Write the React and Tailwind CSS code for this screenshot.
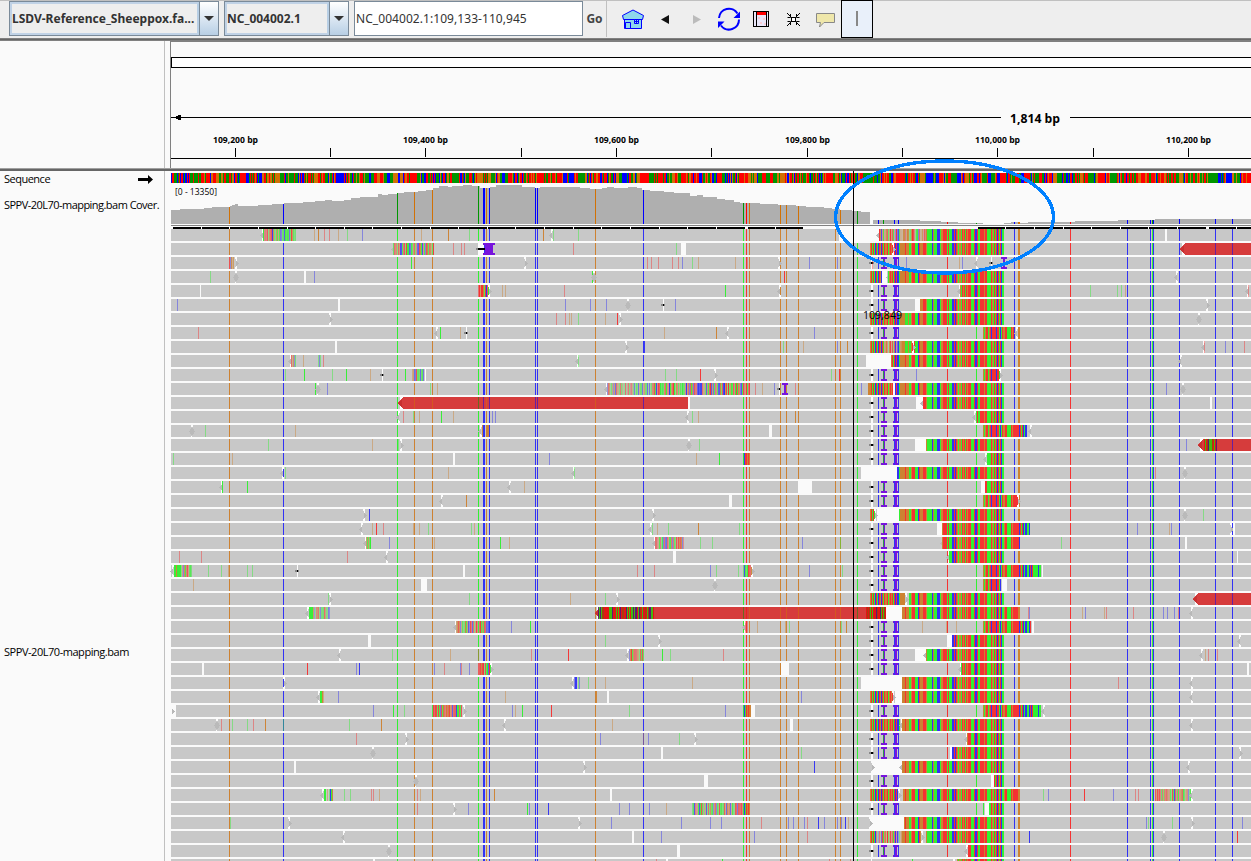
import React from "react";

const TRACK_X = 171;
const TRACK_END = 1251;
const ROW_TOP = 229;
const ROW_STEP = 14;
const ROW_H = 12;

const READ = { g: "#32f032", b: "#3232f5", o: "#cd8232", r: "#f53232" };
const REF = { g: "#009600", b: "#0000ff", o: "#d17105", r: "#ff0000" };

// Mismatch bases of the clipped reads, one letter per pixel, from x = 870.
const CLIP = [
  "orgrgbrgbrobrgroorgororgrbrbbgoo", // 870
  "oooroo" + "o" + "gg" + "o" + "rrr" + "ggg" + "b" + "r" + "ooo" + "rrr" + "o", // 902
  "ggggg" + "b" + "o" + "ggg" + "bbb" + "g" + "oo" + "rrrr", // 927
  "g" + "r" + "ggg" + "bb" + "rbr" + "ogoog" + "rorgr", // 947
  "o" + "rrr" + "ggg" + "r" + "bb" + "r" + "gg" + "rrrr" + "orr", // 967
  "gggg" + "rogrgrbrgrbgg", // 987
].join("");
// Bases beyond the right edge of the clipped segment, from x = 983.
const TAIL = "ogorrgorbrrrrbrrgbgroorrggggrorrrrrrbrgrbgbbggbrbrgggggbgg";

// Positions where every read differs from the reference.
const SNPS = [
  ["o", 229], ["b", 283], ["g", 397], ["o", 414], ["o", 432], ["g", 478], ["b", 483, 2], ["o", 486], ["b", 489],
  ["b", 535], ["b", 537], ["o", 595], ["b", 643], ["g", 743], ["r", 746], ["o", 749], ["o", 780], ["o", 786],
  ["o", 798], ["o", 835], ["o", 840], ["g", 857], ["b", 1014], ["o", 1018, 2], ["r", 1070], ["b", 1127],
  ["b", 1150], ["g", 1152], ["b", 1153], ["b", 1179], ["b", 1215], ["b", 1232],
];
const COVERAGE_EXTRA = [["b", 878], ["g", 883], ["b", 894], ["b", 898], ["r", 947], ["g", 976]];

/* Row tokens:
   g/b/o/r x   faint mismatch, upper case = strong;  w x:w  gap between reads
   <x >x *x    read tips;  ~x:w/a  run of low quality mismatches;  -x  deletion
   Ix          insertion;  Px  wide insertion;  A  spanning read
   Cx:y        clipped segment;  Tx  tail up to x
   Xx:w        red read;  Yx:w  mismatches on a red read */
const ROWS = [
  "<262 ~263:33/.7 o314 O318 r324 r329 o338 g347 b362 o421 O448 g469 O543 <551 g553 g578 w839:40 <878 C879:1004 V880:46 w1165:2",
  "<393 ~393:41/.7 r453 r461 r464 w478:6 P483 r573 g676 w681:5 C870:1004 >894 X1182:69",
  "~229:5/.6 >237 G411 >526 r647 r651 r658 r672 r678 b682 g692 o698 o735 r746 r747 >780 b809 b837 A r872 b906 o959 b962 <976 -992 I1001",
  "g210 *236 w304:2 b314 G592 *594 R784 C870:882 w882:5 <888 C888:1004 <1176",
  "w200:1 ~478:11/.9 >490 o502 o505 r564 G725 <779 A <959 C960:1004 g1090 g1117 g1121 o1125 <1247 r1248",
  "b177 w338:2 b565 b590 b606 *628 -664 b675 A w915:5 C920:1004 >1208",
  ">331 r556 r565 o569 o571 g578 o605 R617 >621 g857 C870:1004 G905 G906 G907 *1199",
  "r198 <436 G440 o460 -467 o664 O716 <727 b814 A C983:990 T1014 <1016",
  "w335:2 >627 B643 B644 g783 o803 b837 O847 C870:1004 V884:18 G905 G906 G907 >914 <1203 r1204 b1225 r1244",
  "<290 ~291:5/.6 o303 g318 b319 g320 r323 <577 g578 w866:25 C891:1004 <1180",
  "g285 G304 g332 G346 o370 -383 G405 ~412:12/.6 w425:1 g665 g676 R700 >716 g831 R839 A b916 T1000 >1001",
  "G315 *318 b327 g430 o437 <606 ~607:45/.45 ~652:98/.75 r755 o762 b774 -780 I782 r795 b861 r868 C868:893 w893:2 C895:1004 b1166 *1183",
  "X400:288 w688:2 A w916:7 <922 C923:1004 w1210:2",
  "<398 r403 g413 o419 G441 o453 b492 b495 <687 g692 o698 O795 A <974 C977:1004",
  "*192 g205 o295 <480 O482 O486 O487 O488 w769:3 A T1027 <1030",
  "g268 o372 g398 >402 *689 g699 A w915:11 C926:1004 b1186 X1200:51 Y1204:13",
  "g173 o232 w453:2 b549 o696 G719 B744 R745 R746 O747 R748 O749 A <985 C987:1004",
  "<282 g285 o448 <573 g574 w861:36 C897:1004 r1155 *1185",
  "<221 G222 G247 <509 o524 w798:14 A w981:4 C985:1004",
  "<441 O466 w729:3 A T1018 >1019",
  ">365 B369 >654 C870:876 w877:22 >876 C899:1004 *1185 g1203",
  "<361 o372 R376 r383 o413 o419 g428 g471 o474 <650 g652 o657 g668 O698 g739 A w937:5 C942:1004 T1030 b1137 r1150 o1169 b1171 >1232 w1233:2",
  "<365 ~366:5/.8 b389 o434 G500 o509 <654 ~655:29/.6 g700 g712 b802 g840 A <942 C942:1004 T1020 g1061 w1185:2",
  "r179 r201 r347 <386 w673:3 A <948 C949:1004 w1237:1",
  "<172 G174 G175 O176 G177 G178 G179 G180 ~181:11/.6 g208 g221 o228 g247 g252 -298 w463:2 r637 r654 b710 g716 g738 ~743:9/.7 >753 b809 g842 A C983:990 T1041 w1042:1",
  "o193 w421:6 *715 A T1001 w1002:5",
  "g328 >331 g469 o570 g605 >618 C870:905 >907 C909:1004 X1195:56",
  "<307 G309 G310 G311 G312 ~313:17/.5 X597:289 Y598:56 Y866:20 w886:16 C902:1004 T1018 r1028 b1029 o1082 b1085 o1104 r1106 r1133 b1163 b1167 b1174 r1178 <1191",
  "<455 ~456:33/.7 b511 G530 <744 r745 r746 r747 o757 o785 g789 g841 O846 A o922 o946 o956 T1031 w1032:2",
  "w368:3 g605 >660 A w947:5 C952:1004 <1239",
  "<339 g392 o450 r478 r531 R568 <627 ~629:15/.7 G662 g670 r723 A w915:11 <925 C926:1004 <1201 o1205 r1208 r1217",
  "w202:2 R307 b356 B359 b434 r444 b460 r461 b469 ~478:13/.8 >492 w781:8 A <960 C961:1004 w1247:2",
  ">285 <572 b574 B575 B576 g578 b579 g588 o605 o692 w861:41 C902:1004 r1118 <1191",
  "<318 G320 G321 O322 o323 b338 o505 O596 w607:2 b801 C870:893 w895:7 >894 C902:1004 <1191",
  "w171:5 >173 b373 G393 g404 ~432:30/.8 >465 b512 o515 G522 R551 g629 b725 B744 G745 R746 O747 R748 O749 O750 w751:4 A T1041 <1043",
  "*217 r221 o229 g232 g247 r253 O265 g283 g349 O381 <504 o612 w790:3 C870:900 <901 C902:1004 <1191",
  "r356 >407 b600 o643 b648 g679 >696 A <966 C967:1004",
  "*373 w661:2 g801 A w950:2 C952:1004 >1241",
  "w294:2 >585 B814 w872:30 >873 <901 C902:1004 <1188",
  "*416 w704:4 A T991 w991:3 C994:1004",
  "<322 G324 G325 o327 g329 B330 G331 O332 g344 g350 r371 r373 o379 r417 o420 O494 w610:2 C870:898 >900 C903:1004 T1018 g1043 b1048 R1084 b1113 r1135 r1138 ~1155:36/.6 <1191",
  "r417 >455 b468 G527 b529 B548 b619 b629 b649 o666 ~692:51/.6 B744 G745 R746 O747 R748 A G983 w985:4 C989:1004",
  "g230 >290 >580 b611 b681 b710 b721 r761 o780 b788 b793 b804 r807 B818 b824 b837 b841 B845 o848 w870:34 >871 C904:1004 b1146 g1148 g1172 >1193 b1242",
  "<343 w632:2 b661 b754 r807 C870:921 V876:26 >923 C926:1004 b1029 B1029 *1164 R1237",
  "*389 w677:3 A <966 C968:1004",
  ">375 r656 w666:2 G722 r829 r850 -872 G912 >955 C957:1004",
];

// [x, top] steps of the coverage area.
const COVERAGE = [
  [171, 210], [180, 209], [204, 208], [212, 207], [230, 206], [232, 205], [235, 204], [238, 206], [258, 205],
  [272, 204], [284, 203], [303, 202], [315, 201], [325, 200], [332, 201], [344, 200], [351, 198], [360, 197],
  [378, 194], [382, 195], [388, 194], [397, 193], [404, 192], [418, 191], [426, 190], [433, 188], [439, 186],
  [448, 187], [452, 186], [463, 185], [472, 186], [480, 188], [490, 187], [496, 185], [522, 187], [535, 188],
  [540, 187], [580, 188], [590, 189], [602, 188], [607, 187], [614, 188], [628, 187], [637, 188], [642, 190],
  [650, 191], [664, 192], [674, 193], [690, 196], [697, 195], [703, 197], [717, 199], [725, 200], [734, 202],
  [740, 203], [760, 204], [778, 205], [796, 206], [806, 207], [812, 207], [824, 208], [832, 209], [840, 210],
  [852, 211], [861, 212], [870, 224], [873, 220], [920, 221], [941, 222], [958, 223], [983, 224], [1004, 223],
  [1011, 222], [1020, 223], [1028, 222], [1075, 221], [1118, 220], [1155, 219], [1251, 219],
];

function generator(seed) {
  let s = seed * 7919 + 13;
  return () => {
    s = (s * 1103515245 + 12345) % 2147483648;
    return s / 2147483648;
  };
}

function pick(next) {
  const v = next();
  return v < 0.34 ? "r" : v < 0.66 ? "g" : v < 0.84 ? "o" : "b";
}

function coverageTop(x) {
  let top = 224;
  for (const [cx, cy] of COVERAGE) if (cx <= x) top = cy;
  return top;
}

function Insertion({ x, y }) {
  return (
    <g fill="#7814dc">
      <rect x={x} y={y} width={6} height={2} />
      <rect x={x + 2} y={y} width={2} height={ROW_H} />
      <rect x={x} y={y + 10} width={6} height={2} />
    </g>
  );
}

function Deletion({ x, y }) {
  return (
    <g>
      <rect x={x - 1} y={y} width={1} height={ROW_H} fill="#fafafa" />
      <rect x={x - 3} y={y + 5} width={4} height={2} fill="#888" />
      <rect x={x - 1} y={y + 5} width={1} height={2} fill="#000" />
    </g>
  );
}

function SpanningRead({ y }) {
  const r = (x, w, c) => <rect x={x} y={y} width={w} height={ROW_H} fill={c} />;
  return (
    <g>
      {r(871, 2, "#fafafa")}
      <rect x={869} y={y + 5} width={5} height={2} fill="#888" />
      <rect x={871} y={y + 5} width={2} height={2} fill="#000" />
      {r(878, 1, READ.b)}
      <Insertion x={881} y={y} />
      <rect x={883} y={y + 2} width={1} height={8} fill="#289646" />
      <Insertion x={893} y={y} />
      {r(894, 1, READ.b)}
      {r(898, 1, READ.b)}
      {r(947, 1, READ.r)}
      {r(976, 1, READ.g)}
    </g>
  );
}

function Tip({ x, y, dir }) {
  if (dir === "*") {
    return (
      <g>
        <rect x={x - 1} y={y} width={2} height={2} fill="#fafafa" />
        <rect x={x - 1} y={y + 11} width={1} height={1} fill="#fafafa" />
        <path d={`M${x - 3} ${y + 6.5}L${x} ${y + 2}L${x + 3} ${y + 6.5}L${x} ${y + 11}Z`} fill="#bababa" />
      </g>
    );
  }
  const s = dir === "<" ? 1 : -1;
  return (
    <g>
      <path d={`M${x} ${y}h${2 * s}l${-s} 4h${-s}ZM${x} ${y + 12}h${2 * s}l${-s} -4h${-s}Z`} fill="#fafafa" />
      <path d={`M${x - 2 * s} ${y + 6.5}l${3 * s} -3.5v7Z`} fill="#b8b8b8" />
    </g>
  );
}

function Token({ t, y, row, clipped }) {
  if (t === "A") return <SpanningRead y={y} />;
  const kind = t[0];
  const [pos, alpha] = t.slice(1).split("/");
  const [x, n] = pos.split(":").map(Number);
  const bar = (bx, w, fill, opacity = 1, key) => (
    <rect key={key} x={bx} y={y} width={w} height={ROW_H} fill={fill} opacity={opacity} />
  );
  if (kind === "w") return bar(x, n, "#fafafa");
  if (kind === "<" || kind === ">" || kind === "*") return <Tip x={x} y={y} dir={kind} />;
  if (kind === "-") return <Deletion x={x} y={y} />;
  if (kind === "I") return <Insertion x={x} y={y} />;
  if (kind === "P")
    return (
      <g>
        <rect x={x - 7} y={y + 5} width={3} height={2} fill="#888" />
        <rect x={x - 5} y={y + 5} width={7} height={2} fill="#000" />
        <rect x={x} y={y} width={12} height={2} fill="#7814dc" />
        <rect x={x + 2} y={y} width={8} height={ROW_H} fill="#7814dc" />
        <rect x={x} y={y + 10} width={12} height={2} fill="#7814dc" />
      </g>
    );
  if (kind === "C")
    return (
      <g>
        {Array.from({ length: n - x }, (_, i) => bar(x + i, 1, READ[CLIP[Math.max(0, x + i - 870)] || "g"], 1, i))}
      </g>
    );
  // Faded stretch laid over a clipped segment.
  if (kind === "V") {
    const next = generator(x + row);
    return <g>{Array.from({ length: n }, (_, i) => bar(x + i, 1, "#c8c8c8", next() * 0.75, i))}</g>;
  }
  if (kind === "T") {
    const from = clipped ? 1004 : 983;
    return <g>{Array.from({ length: x - from }, (_, i) => bar(from + i, 1, READ[TAIL[from + i - 983] || "g"], 1, i))}</g>;
  }
  if (kind === "X") {
    return (
      <g>
        {bar(x, 4, "#fafafa")}
        <path d={`M${x - 2} ${y + 6}L${x + 3} ${y}H${x + n}V${y + 12}H${x + 3}Z`} fill="#d63c3c" />
        <path d={`M${x - 2} ${y + 6}L${x + 2} ${y + 2}V${y + 11}Z`} fill="#c83030" />
        {SNPS.filter((s) => s[1] > x + 4 && s[1] < x + n).map((s) => bar(s[1], 1, REF[s[0]], 0.5, s[1]))}
      </g>
    );
  }
  if (kind === "~" || kind === "Y") {
    const next = generator(x + row);
    return (
      <g>
        {kind === "~" && bar(x, n, "#c8c8c8")}
        {Array.from({ length: n }, (_, i) => {
          const c = pick(next);
          const v = next();
          return kind === "Y"
            ? bar(x + i, 1, c === "g" ? "#30c80a" : c === "b" ? "#501478" : c === "o" ? "#a03c0a" : "#e60f0f", 0.9, i)
            : bar(x + i, 1, READ[c], Math.min(1, Number(alpha) * (0.55 + v * 0.8)), i);
        })}
      </g>
    );
  }
  const strong = kind !== kind.toLowerCase();
  return bar(x, 1, READ[kind.toLowerCase()], strong ? 0.95 : 0.45);
}

function ReadRow({ tokens, index }) {
  const y = ROW_TOP + index * ROW_STEP;
  const list = tokens.split(" ");
  const clipped = list.some((t) => /^C\d+:1004/.test(t));
  return (
    <g>
      <rect x={TRACK_X} y={y} width={TRACK_END - TRACK_X} height={ROW_H} fill="#c8c8c8" />
      {SNPS.map(([c, x, w]) => (
        <rect key={x} x={x} y={y} width={w || 1} height={ROW_H} fill={READ[c]} />
      ))}
      {list.map((t, i) => (
        <Token key={i} t={t} y={y} row={index} clipped={clipped} />
      ))}
    </g>
  );
}

function SequenceTrack() {
  const next = generator(11);
  const bars = [];
  for (let x = TRACK_X; x < TRACK_END; ) {
    const c = pick(next);
    const v = next();
    const w = v < 0.78 ? 1 : v < 0.92 ? 2 : v < 0.98 ? 3 : 5;
    bars.push(<rect key={x} x={x} y={173} width={w} height={10} fill={REF[c]} />);
    x += w;
  }
  return <g>{bars}</g>;
}

function Coverage() {
  return (
    <g>
      {COVERAGE.slice(0, -1).map(([x, top], i) => (
        <rect key={x} x={x} y={top} width={COVERAGE[i + 1][0] - x} height={224 - top} fill="#afafaf" />
      ))}
      {[...SNPS.filter((s) => s[1] !== 835), ...COVERAGE_EXTRA].map(([c, x, w]) => {
        const top = coverageTop(x);
        return <rect key={x} x={x} y={top} width={w || 1} height={224 - top} fill={REF[c]} />;
      })}
      <rect x={171} y={225} width={1080} height={1} fill="#828282" />
    </g>
  );
}

const GAPS = [201, 229, 258, 287, 315, 344, 372, 401, 430, 458, 487, 515, 544, 573, 601, 630, 659, 687, 716, 745, 775, 1005, 1034, 1063, 1091, 1120, 1148, 1177, 1206, 1236];

const TICKS = [235, 330, 425, 521, 616, 711, 807, 902, 997, 1093, 1188];
const TICK_LABELS = [
  [235, "109,200 bp"], [425, "109,400 bp"], [616, "109,600 bp"], [807, "109,800 bp"], [997, "110,000 bp"], [1188, "110,200 bp"],
];

function Ruler() {
  return (
    <g>
      <rect x={170} y={41} width={1} height={128} fill="#808080" />
      <rect x={170} y={41} width={1081} height={1} fill="#808080" />
      <rect x={171} y={57} width={1090} height={11} fill="#000" />
      <rect x={172} y={58} width={1090} height={9} fill="#fff" />
      <rect x={171} y={117} width={830} height={1} />
      <rect x={1070} y={117} width={181} height={1} />
      <path d="M174 117.5L179 115H181V120H179Z" />
      <text x={1010} y={123} fontSize={12.5} fontWeight={700} textLength={50} lengthAdjust="spacingAndGlyphs">1,814 bp</text>
      {TICKS.map((x) => (
        <rect key={x} x={x} y={148} width={1} height={9} />
      ))}
      <rect x={171} y={158} width={1080} height={1} />
      {TICK_LABELS.map(([x, label]) => (
        <text key={x} x={x - 22} y={143} fontSize={9.5} fontWeight={700} textLength={45} lengthAdjust="spacingAndGlyphs">
          {label}
        </text>
      ))}
    </g>
  );
}

function TrackCanvas() {
  return (
    <svg width={1085} height={820} viewBox="166 41 1085 820" className="block font-['Open_Sans',sans-serif]" shapeRendering="crispEdges">
      <Ruler />
      <rect x={166} y={168} width={1085} height={1} fill="#a0a0a0" />
      <rect x={166} y={169} width={1085} height={2} fill="#666" />
      <SequenceTrack />
      <Coverage />
      <text x={175} y={195} fontSize={9.5} textLength={42} lengthAdjust="spacingAndGlyphs">[0 - 13350]</text>
      {ROWS.map((tokens, i) => (
        <ReadRow key={i} tokens={tokens} index={i} />
      ))}
      <rect x={173} y={227} width={630} height={2} />
      <rect x={978} y={227} width={273} height={2} />
      {GAPS.map((x) => (
        <rect key={x} x={x} y={227} width={x === 745 || x === 1206 ? 3 : 1} height={2} fill="#fafafa" />
      ))}
      <rect x={853} y={171} width={1} height={690} />
      <text x={863} y={319} fontSize={11} textLength={39} lengthAdjust="spacingAndGlyphs">109,849</text>
      <ellipse cx={944.5} cy={217} rx={109} ry={56} fill="none" stroke="#0080ff" strokeWidth={3.4} />
    </svg>
  );
}

function Combo({ text, className }) {
  return (
    <div className={`flex h-[35px] shrink-0 border border-[#7a8a99] bg-[#eee] ${className}`}>
      <div className="flex min-w-0 flex-1 items-center border-2 border-[#c0d2e6] border-r-[#b8cfe5] text-[12px] font-bold whitespace-nowrap text-[#333]">
        {text}
      </div>
      <div className="flex w-[19px] items-center justify-center border-l border-[#7a8a99] bg-linear-to-b from-white to-[#b8cfe5]">
        <svg width="10" height="5" viewBox="0 0 10 5"><path d="M0 0H10L5 5Z" fill="#333" /></svg>
      </div>
    </div>
  );
}

function Toolbar() {
  return (
    <header className="flex h-[41px] items-start border-t border-[#c0c0c0] bg-[#eee] font-['Noto_Sans',sans-serif]">
      <Combo text="LSDV-Reference_Sheeppox.fa..." className="ml-[9px] w-[210px]" />
      <Combo text="NC_004002.1" className="ml-[5px] w-[125px]" />
      <div className="ml-[5px] flex h-[35px] w-[229px] shrink-0 items-center border border-[#7a8a99] bg-white pl-px text-[12px] tracking-[0.06px] text-[#333]">
        NC_004002.1:109,133-110,945
      </div>
      <div className="flex h-9 w-6 shrink-0 items-center justify-center border-r border-[#c0c0c0] text-[12px] font-bold text-[#444]">Go</div>
      <svg width="268" height="38" viewBox="607 0 268 38" className="-mt-px block shrink-0" aria-hidden="true">
        <g fill="#8fd8ec" stroke="#0000ff" strokeWidth="1">
          <path d="M624.5 15.5H641.5V28.5H624.5Z" />
          <path d="M622.5 15.5L633 10L643.5 15.5L642.5 19.5H623.5Z" />
          <path d="M625.5 22.5H630.5V28.5H625.5ZM634.5 19.5H638.5V23.5H634.5ZM636.5 19V24M634 21.5H639" />
        </g>
        <path d="M661 19.5L669 15V24Z" fill="#111" />
        <path d="M701 19.5L693 15V24Z" fill="#bbb" />
        <g fill="none" stroke="#0000ff" strokeWidth="2">
          <path d="M719 18A10 10 0 0 1 737.5 13.5" />
          <path d="M739 19.5A10 10 0 0 1 721 25.5" />
        </g>
        <path d="M740 11.5V18H733.5ZM718 28V21.5H724.5Z" fill="#0000ff" />
        <g>
          <rect x="753.5" y="11.5" width="15" height="15" fill="#e9e6f8" stroke="#000" />
          <path d="M757 12H766V15H757Z" fill="#f00" />
          <path d="M758 17h2v2h-2zM763 18h2v2h-2zM760 22h2v2h-2zM764 23h2v2h-2z" fill="#f7cbd3" />
          <path d="M756.5 12V27M766.5 12V27" stroke="#000" />
        </g>
        <g fill="none" stroke="#000">
          <rect x="791.5" y="17.5" width="4" height="4" fill="#fff" />
          <path d="M787 13L791 17M787.5 17.5H790.5V14M800 13L796 17M799.5 17.5H796.5V14M787 26L791 22M787.5 21.5H790.5V25M800 26L796 22M799.5 21.5H796.5V25" />
        </g>
        <path d="M816.5 13.5H834.5V22.5H824L819.5 27L820.5 22.5H816.5Z" fill="#efe7aa" stroke="#888" />
        <rect x="841.5" y="0.5" width="31" height="37" fill="#e9f0fa" stroke="#000" />
        <path d="M856 11H858V26H856Z" fill="#888" />
      </svg>
    </header>
  );
}

function TrackNames() {
  return (
    <aside className="flex w-[166px] shrink-0 flex-col font-['Open_Sans',sans-serif] text-[11px] leading-[14px] text-black">
      <div className="h-[127px] w-[165px] border-r border-[#c0c0c0]" />
      <div className="h-px bg-[#a0a0a0]" />
      <div className="h-[2px] bg-[#666]" />
      <div className="flex w-[165px] flex-1 flex-col overflow-hidden border-r border-[#c0c0c0] pl-1">
        <div className="mt-px flex h-[14px] items-center justify-between pr-[10px]">
          <span className="tracking-[-0.5px]">Sequence</span>
          <svg width="16" height="9" viewBox="0 0 16 9"><path d="M0 3H10V0L15 4.5L10 9V6H0Z" /></svg>
        </div>
        <div className="mt-[12px] h-[14px] whitespace-nowrap tracking-[-0.53px]">SPPV-20L70-mapping.bam Cover.</div>
        <div className="mt-[433px] h-[14px] whitespace-nowrap tracking-[-0.46px]">SPPV-20L70-mapping.bam</div>
      </div>
    </aside>
  );
}

export default function App() {
  return (
    <div className="flex h-[861px] w-[1251px] flex-col overflow-hidden bg-[#fafafa]">
      <div className="relative h-[41px] shrink-0">
        <Toolbar />
        <div className="absolute inset-x-0 bottom-0 h-[3px] border-y border-[#808080] bg-[#666]" />
      </div>
      <main className="flex min-h-0 flex-1">
        <TrackNames />
        <TrackCanvas />
      </main>
    </div>
  );
}
